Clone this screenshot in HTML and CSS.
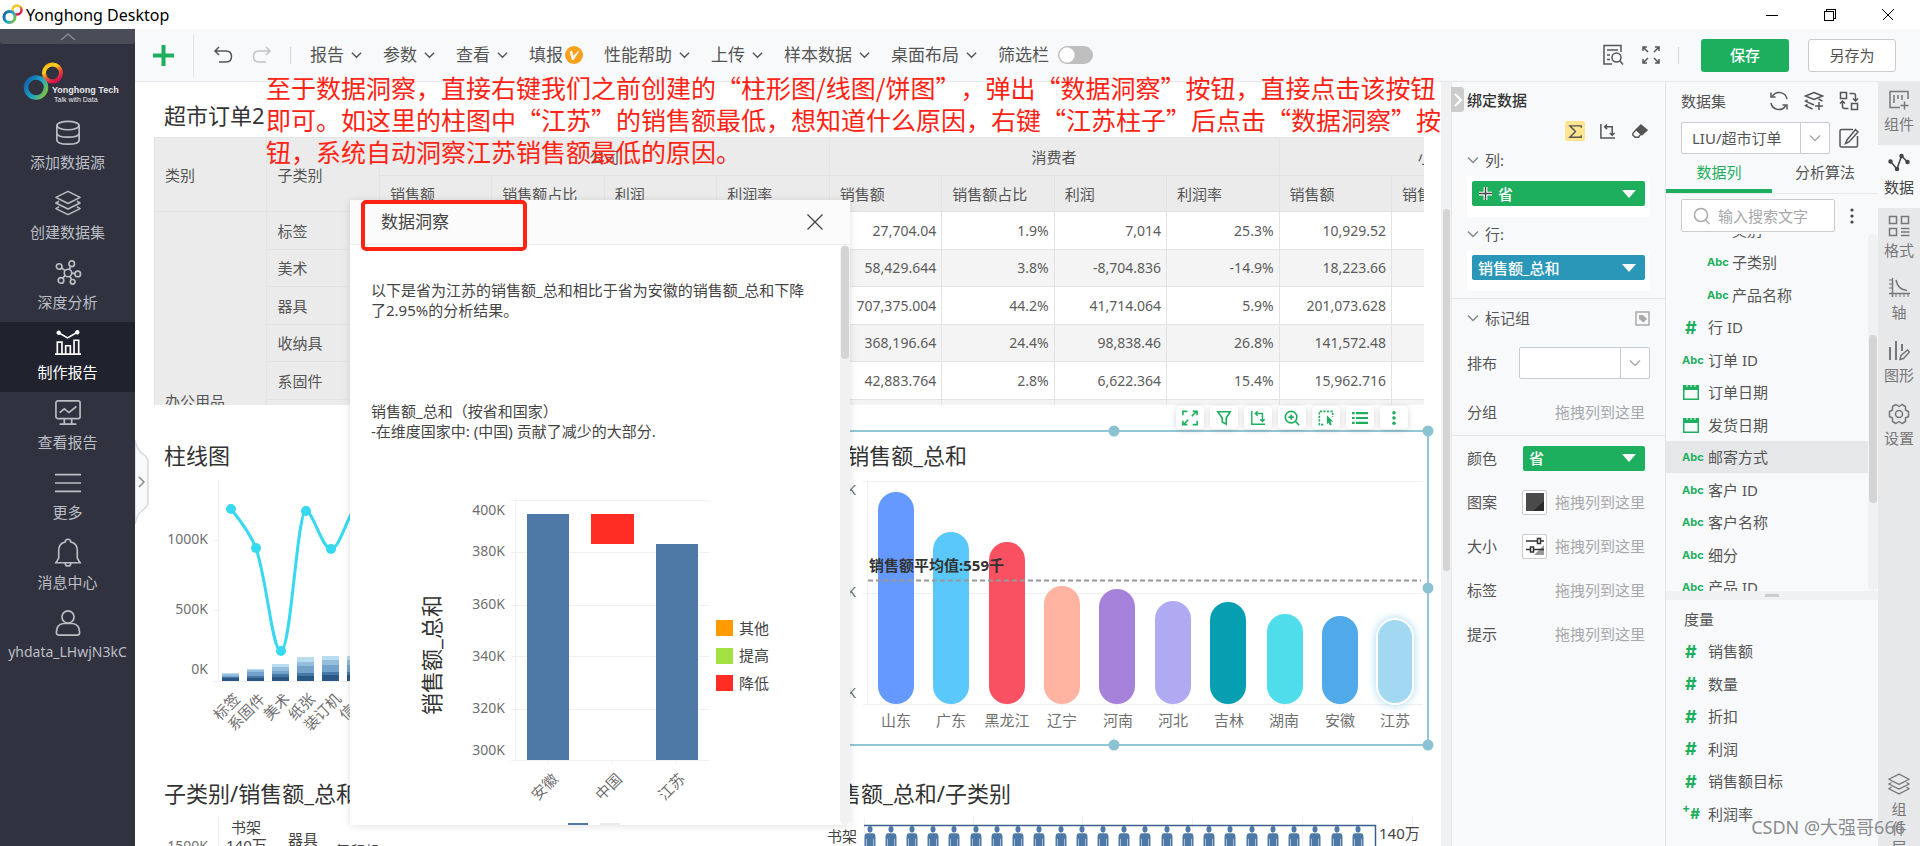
FILE: index.html
```html
<!DOCTYPE html>
<html lang="zh-CN">
<head>
<meta charset="utf-8">
<title>Yonghong Desktop</title>
<link rel="stylesheet" href="styles.css">
</head>
<body>
<svg class="defs" width="0" height="0" aria-hidden="true">
  <defs>
    <linearGradient id="warm" x1="0" y1="0" x2="0.6" y2="1"><stop offset="0" stop-color="#f7b516"/><stop offset="0.35" stop-color="#fbd31c"/><stop offset="0.65" stop-color="#ee5a2b"/><stop offset="1" stop-color="#d8134f"/></linearGradient>
    <linearGradient id="cool" x1="0" y1="0.2" x2="1" y2="0.8"><stop offset="0" stop-color="#1265ae"/><stop offset="0.55" stop-color="#1ea6c9"/><stop offset="1" stop-color="#7cc243"/></linearGradient>
    <symbol id="chev" viewBox="0 0 12 8"><path d="M1 1.5l5 5 5-5" fill="none" stroke="currentColor" stroke-width="1.5"/></symbol>
    <symbol id="tri" viewBox="0 0 14 8"><path d="M0 0h14L7 8z" fill="currentColor"/></symbol>
    <symbol id="layers" viewBox="0 0 28 28"><path d="M14 1.500L27 8 14 14.500 1 8zM4.500 12L1 14l13 6.500L27 14l-3.500-2M4.500 18L1 20l13 6.500L27 20l-3.500-2" fill="none" stroke="currentColor" stroke-width="1.600" stroke-linejoin="round"/></symbol>
    <symbol id="cal" viewBox="0 0 16 16"><path d="M0 1h16v15H0zM1.500 6v8.500h13V6z" fill="currentColor" fill-rule="evenodd"/><path d="M4 0v3M12 0v3M8 0v3" stroke="#f8f9fb" stroke-width="1"/></symbol>
    <symbol id="axis" viewBox="0 0 18 18"><path d="M2 1v15h15M6 4h8v9M8.500 1.500L6 4l2.500 2.500M11.500 10.500L14 13l2.500-2.500" fill="none" stroke="currentColor" stroke-width="1.600"/></symbol>
    <symbol id="man" viewBox="0 0 12 24" preserveAspectRatio="none"><circle cx="6" cy="2.500" r="2.500"/><path d="M3 5.500h6q2.500 0 2.500 3V15H9.500V9.500H9V24H6.500V15h-1v9H3V9.500h-.5V15h-2V8.500q0-3 2.500-3z"/></symbol>
  </defs>
</svg>

<header class="titlebar">
  <svg class="applogo" viewBox="0 0 21 21"><circle cx="15" cy="6" r="4.500" fill="none" stroke="url(#warm)" stroke-width="2.500"/><circle cx="7.500" cy="13" r="5.500" fill="none" stroke="url(#cool)" stroke-width="3"/></svg>
  <span class="appname">Yonghong Desktop</span>
  <div class="winctl">
    <button aria-label="最小化"><svg viewBox="0 0 14 14"><path d="M1 7.500h12"/></svg></button>
    <button aria-label="还原"><svg viewBox="0 0 14 14"><path d="M1.500 3.500h9v9h-9zM3.500 3.500v-2h9v9h-2"/></svg></button>
    <button aria-label="关闭"><svg viewBox="0 0 14 14"><path d="M1.500 1.500l11 11M12.500 1.500l-11 11"/></svg></button>
  </div>
</header>

<div class="app">
  <nav class="sidebar">
    <button class="fold" aria-label="收起"><svg viewBox="0 0 16 8"><path d="M1 7l7-6 7 6"/></svg></button>
    <svg class="brand" viewBox="0 44 135 68">
      <circle cx="52.500" cy="73" r="8.500" fill="none" stroke="url(#warm)" stroke-width="4"/>
      <circle cx="36" cy="87.500" r="10" fill="none" stroke="url(#cool)" stroke-width="4.500"/>
      <text class="b1" x="52" y="93">Yonghong Tech</text><text class="b2" x="54" y="102">Talk with Data</text>
    </svg>
    <a class="nav" href="#"><svg viewBox="0 0 28 28"><ellipse cx="14" cy="6" rx="12" ry="4.500"/><path d="M2 6v15.500q0 4.500 12 4.500t12-4.500V6M2 14q0 4.500 12 4.500T26 14"/></svg>添加数据源</a>
    <a class="nav" href="#"><svg><use href="#layers"/></svg>创建数据集</a>
    <a class="nav" href="#"><svg viewBox="0 0 28 28"><circle cx="14" cy="14" r="4"/><circle cx="4.500" cy="7" r="3"/><circle cx="18" cy="4" r="3"/><circle cx="24.500" cy="15" r="3"/><circle cx="6.500" cy="22" r="3"/><circle cx="19" cy="23.500" r="2.500"/><path d="M7 8.500l4 3M16.800 7l-1.300 3.300M18 14.200l3.500.4M11 16.500l-2.500 3M16 17.500l1.800 3.500"/></svg>深度分析</a>
    <a class="nav on" href="#"><svg viewBox="0 0 28 28"><path class="b" d="M0 26h28M2.500 26V13h5v13M11.500 26v-9h5v9M20.500 26V11h5v15M4 3l9.500 5.500L24 2.500"/><circle class="f" cx="4" cy="3" r="1.500"/><circle class="f" cx="24" cy="2.500" r="1.500"/></svg>制作报告</a>
    <a class="nav" href="#"><svg viewBox="0 0 28 28"><rect x="1" y="1" width="26" height="19" rx="2"/><path d="M5 13.500l5-4 5 4 8-6.500M10 20v5M18 20v5M5 26h18"/></svg>查看报告</a>
    <a class="nav" href="#"><svg viewBox="0 0 28 28"><path d="M0 5h28M0 14h28M0 23h28"/></svg>更多</a>
    <a class="nav" href="#"><svg viewBox="0 0 28 28"><path d="M1 24.500h26l-3-5v-8q0-8-7-9.300a3 3 0 0 0-6 0Q4 3.500 4 11.500v8zM11 25q0 3 3 3t3-3"/></svg>消息中心</a>
    <a class="nav user" href="#"><svg viewBox="0 0 28 28"><circle cx="14" cy="7.500" r="6.500"/><path d="M4 27q-2.500 0-2.500-2.500Q1.500 15.500 9 14.500h10q7.500 1 7.500 10 0 2.500-2.500 2.500z"/></svg>yhdata_LHwjN3kC</a>
  </nav>

  <div class="main">
    <div class="toolbar">
      <button class="add" aria-label="新建"><svg viewBox="0 0 21 21"><path d="M10.500 0v21M0 10.500h21" stroke="#1daf5d" stroke-width="4"/></svg></button>
      <button class="undo" aria-label="撤销"><svg viewBox="0 0 20 18"><path d="M6 1L2 5l4 4M2 5h11q5.500 0 5.500 5.500T13 16H6"/></svg></button>
      <button class="redo" aria-label="重做"><svg viewBox="0 0 20 18"><path d="M14 1l4 4-4 4M18 5H7Q1.500 5 1.500 10.500T7 16h7"/></svg></button>
      <i class="sep"></i>
      <div class="menus">
        <button>报告<svg><use href="#chev"/></svg></button>
        <button>参数<svg><use href="#chev"/></svg></button>
        <button>查看<svg><use href="#chev"/></svg></button>
        <button class="vip">填报<svg viewBox="0 0 18 18"><circle cx="9" cy="9" r="9" fill="#f9a01c"/><path d="M4.500 5.500l2.500-.5 1.500 5L13 5l1 .5-5.500 8.500H7z" fill="#fff"/></svg></button>
        <button>性能帮助<svg><use href="#chev"/></svg></button>
        <button>上传<svg><use href="#chev"/></svg></button>
        <button>样本数据<svg><use href="#chev"/></svg></button>
        <button>桌面布局<svg><use href="#chev"/></svg></button>
        <label>筛选栏<input class="toggle" type="checkbox"></label>
      </div>
      <div class="right">
        <button class="ic" aria-label="查找"><svg viewBox="0 0 22 22"><path d="M10 20H2V1.500h17V8M5 6h11M5 11h3M5 15.500h3"/><circle cx="14.500" cy="13.500" r="4.500"/><path d="M18 17l3 3.500"/></svg></button>
        <button class="ic" aria-label="全屏"><svg viewBox="0 0 22 22"><path d="M3 7V3h4M3 3l5 5M15 3h4v4M19 3l-5 5M3 15v4h4M3 19l5-5M15 19h4v-4M19 19l-5-5"/></svg></button>
        <i class="sep"></i>
        <button class="save">保存</button>
        <button class="saveas">另存为</button>
      </div>
    </div>

    <div class="work">
      <main class="canvas">
        <h2>超市订单2</h2>
        <div class="tablewrap">
          <table>
            <thead>
              <tr class="h1"><th rowspan="2">类别</th><th rowspan="2">子类别</th><th class="grp" colspan="4">公司</th><th class="grp" colspan="4">消费者</th><th class="grp" colspan="3">小型企业</th></tr>
              <tr class="h2"><th>销售额</th><th>销售额占比</th><th>利润</th><th>利润率</th><th>销售额</th><th>销售额占比</th><th>利润</th><th>利润率</th><th>销售额</th><th>销售额占比</th><th>利润</th></tr>
            </thead>
            <tbody>
              <tr><th rowspan="10">办公用品</th><th>标签</th><td></td><td></td><td></td><td></td><td>27,704.04</td><td>1.9%</td><td>7,014</td><td>25.3%</td><td>10,929.52</td><td></td><td></td></tr>
              <tr><th>美术</th><td></td><td></td><td></td><td></td><td>58,429.644</td><td>3.8%</td><td>-8,704.836</td><td>-14.9%</td><td>18,223.66</td><td></td><td></td></tr>
              <tr><th>器具</th><td></td><td></td><td></td><td></td><td>707,375.004</td><td>44.2%</td><td>41,714.064</td><td>5.9%</td><td>201,073.628</td><td></td><td></td></tr>
              <tr><th>收纳具</th><td></td><td></td><td></td><td></td><td>368,196.64</td><td>24.4%</td><td>98,838.46</td><td>26.8%</td><td>141,572.48</td><td></td><td></td></tr>
              <tr><th>系固件</th><td></td><td></td><td></td><td></td><td>42,883.764</td><td>2.8%</td><td>6,622.364</td><td>15.4%</td><td>15,962.716</td><td></td><td></td></tr>
              <tr><th></th><td></td><td></td><td></td><td></td><td></td><td></td><td></td><td></td><td></td><td></td><td></td></tr>
              <tr><th></th></tr><tr><th></th></tr><tr><th></th></tr><tr><th></th></tr>
            </tbody>
          </table>
        </div>

        <div class="charts">
          <section class="widget">
            <h2>柱线图</h2>
            <svg class="plot" viewBox="154 476 635 269">
              <path class="grid" d="M218.500 480v201M213 681.500h576M213 540.500h6M213 610.500h6M231 682v4M256 682v4M281 682v4M306 682v4M331 682v4"/>
              <g class="ax end"><text x="208" y="544">1000K</text><text x="208" y="614">500K</text><text x="208" y="674">0K</text></g>
              <g fill="#b9dcf0"><path d="M222 673h17v8h-17zM247 669h17v12h-17zM272 664h17v17h-17zM297 657h17v24h-17zM322 656h17v25h-17zM347 656h17v25h-17z"/></g>
              <g fill="#94bddb"><path d="M222 674h17v7h-17zM247 670h17v11h-17zM272 667h17v14h-17zM297 662h17v19h-17zM322 660h17v21h-17zM347 660h17v21h-17z"/></g>
              <g fill="#73a2cc"><path d="M222 676h17v5h-17zM247 672h17v9h-17zM272 671h17v10h-17zM297 666h17v15h-17zM322 665h17v16h-17zM347 665h17v16h-17z"/></g>
              <g fill="#4478a8"><path d="M222 677h17v4h-17zM247 676h17v5h-17zM272 674h17v7h-17zM297 673h17v8h-17zM322 672h17v9h-17zM347 672h17v9h-17z"/></g>
              <g fill="#2a5783"><path d="M222 678h17v3h-17zM247 678h17v3h-17zM272 677h17v4h-17zM297 676h17v5h-17zM322 675h17v6h-17zM347 675h17v6h-17z"/></g>
              <path d="M231 509Q249 531 256 548C268 585 272 651 281 651C291 651 297 511 306 511C313 511 322 549 331 549C339 549 345 523 358 500" fill="none" stroke="#37d9f1" stroke-width="3"/>
              <g fill="#37d9f1"><circle cx="231" cy="509" r="5"/><circle cx="256" cy="548" r="5"/><circle cx="281" cy="651" r="5"/><circle cx="306" cy="511" r="5"/><circle cx="331" cy="549" r="5"/></g>
              <g class="ax tilt end"><text transform="translate(241 700) rotate(-45)">标签</text><text transform="translate(266 700) rotate(-45)">系固件</text><text transform="translate(291 700) rotate(-45)">美术</text><text transform="translate(316 700) rotate(-45)">纸张</text><text transform="translate(342 700) rotate(-45)">装订机</text><text transform="translate(367 700) rotate(-45)">信封</text></g>
            </svg>
          </section>

          <section class="widget selected">
            <h2>省/销售额_总和</h2>
            <svg class="plot" viewBox="799 476 629 269">
              <path class="grid" d="M867.500 481v223M863 481.500h560M863 593.500h560M863 704.500h560M896 705v4M951 705v4M1007 705v4M1062 705v4M1117 705v4M1173 705v4M1229 705v4M1284 705v4M1340 705v4M1395 705v4"/>
              <g class="ax end"><text x="856" y="495">1000K</text><text x="856" y="597">500K</text><text x="856" y="698">0K</text></g>
              <rect x="878" y="492" width="36" height="212" rx="18" fill="#6699ff"/>
              <rect x="933" y="532" width="36" height="172" rx="18" fill="#5ac8fa"/>
              <rect x="989" y="542" width="36" height="162" rx="18" fill="#f95062"/>
              <rect x="1044" y="586" width="36" height="118" rx="18" fill="#ffb3a0"/>
              <rect x="1099" y="589" width="36" height="115" rx="18" fill="#a581d9"/>
              <rect x="1155" y="601" width="36" height="103" rx="18" fill="#b0aaf3"/>
              <rect x="1210" y="602" width="36" height="102" rx="18" fill="#069fb2"/>
              <rect x="1267" y="614" width="36" height="90" rx="18" fill="#4fddec"/>
              <rect x="1322" y="616" width="36" height="88" rx="18" fill="#50aaea"/>
              <rect class="glow" x="1377" y="619" width="36" height="85" rx="18"/>
              <path d="M868 580.500h553" stroke="#999" stroke-width="2" stroke-dasharray="5 3"/>
              <text class="avg" x="869" y="571">销售额平均值:559千</text>
              <g class="ax mid"><text x="896" y="726">山东</text><text x="951" y="726">广东</text><text x="1007" y="726">黑龙江</text><text x="1062" y="726">辽宁</text><text x="1118" y="726">河南</text><text x="1173" y="726">河北</text><text x="1229" y="726">吉林</text><text x="1284" y="726">湖南</text><text x="1340" y="726">安徽</text><text x="1395" y="726">江苏</text></g>
            </svg>
            <i class="knob tc"></i><i class="knob tr"></i><i class="knob mr"></i><i class="knob bc"></i><i class="knob br"></i>
            <div class="tools">
              <button aria-label="放大"><svg viewBox="0 0 18 18"><path d="M1 6V1.500h5M12 1.500h5V6M17 12v4.500h-5M6 16.500H1V12M11 7l5-5M7 11l-5 5"/></svg></button>
              <button aria-label="筛选"><svg viewBox="0 0 18 18"><path d="M2 2h14l-4.500 7v7L7 13.500V9z"/></svg></button>
              <button aria-label="转换"><svg><use href="#axis"/></svg></button>
              <button aria-label="缩放"><svg viewBox="0 0 18 18"><circle cx="8" cy="8" r="6.500"/><path d="M13 13l4 4M8 5v6M5 8h6"/></svg></button>
              <button aria-label="框选"><svg viewBox="0 0 18 18"><path d="M6 16.500H1.500v-15h15V8" stroke-dasharray="2.500 1.500"/><path d="M10 6l7 7h-3l1.500 3.500-2 .8L12 14l-2 2z" fill="#1daf5d" stroke="none"/></svg></button>
              <button aria-label="明细"><svg viewBox="0 0 18 18"><path d="M0 3.500h3M4.500 3.500H18M0 9h3M4.500 9H18M0 14.500h3M4.500 14.500H18" stroke-width="2.500"/></svg></button>
              <button aria-label="更多操作"><svg viewBox="0 0 18 18"><g fill="#1daf5d" stroke="none"><circle cx="9" cy="3" r="2"/><circle cx="9" cy="9" r="2"/><circle cx="9" cy="15" r="2"/></g></svg></button>
            </div>
          </section>

          <section class="widget low">
            <h2>子类别/销售额_总和</h2>
            <svg class="plot" viewBox="154 817 635 269">
              <path class="grid" d="M218.500 818v200"/>
              <g class="ax end"><text x="208" y="851">1500K</text></g>
              <g class="ax dark"><text x="231" y="833">书架</text><text x="226" y="851">140万</text><text x="288" y="845">器具</text><text x="335" y="857">复印机</text></g>
            </svg>
          </section>

          <section class="widget low">
            <h2>销售额_总和/子类别</h2>
            <svg class="plot" viewBox="799 817 629 269">
              <path class="grid" d="M864.500 818v200M973.500 818v200M1082.500 818v200M1192.500 818v200M1302.500 818v200M1412.500 818v200"/>
              <path d="M864 825.500h511.500V860" fill="none" stroke="#3c5f8a" stroke-width="1.500"/>
              <g class="ax dark end"><text x="857" y="842">书架</text></g>
              <g class="ax dark"><text x="1379" y="839">140万</text></g>
              <g fill="#4e79a7">
                <use href="#man" x="864" y="826" width="12" height="32"/><use href="#man" x="885" y="826" width="12" height="32"/><use href="#man" x="906" y="826" width="12" height="32"/><use href="#man" x="927" y="826" width="12" height="32"/><use href="#man" x="948" y="826" width="12" height="32"/><use href="#man" x="970" y="826" width="12" height="32"/><use href="#man" x="991" y="826" width="12" height="32"/><use href="#man" x="1012" y="826" width="12" height="32"/><use href="#man" x="1033" y="826" width="12" height="32"/><use href="#man" x="1055" y="826" width="12" height="32"/><use href="#man" x="1076" y="826" width="12" height="32"/><use href="#man" x="1097" y="826" width="12" height="32"/><use href="#man" x="1118" y="826" width="12" height="32"/><use href="#man" x="1139" y="826" width="12" height="32"/><use href="#man" x="1161" y="826" width="12" height="32"/><use href="#man" x="1182" y="826" width="12" height="32"/><use href="#man" x="1203" y="826" width="12" height="32"/><use href="#man" x="1224" y="826" width="12" height="32"/><use href="#man" x="1246" y="826" width="12" height="32"/><use href="#man" x="1267" y="826" width="12" height="32"/><use href="#man" x="1288" y="826" width="12" height="32"/><use href="#man" x="1309" y="826" width="12" height="32"/><use href="#man" x="1331" y="826" width="12" height="32"/><use href="#man" x="1352" y="826" width="12" height="32"/>
              </g>
            </svg>
          </section>
        </div>
        <button class="drawer" aria-label="展开"><svg viewBox="0 0 14 84"><path d="M0 0Q2 10 8 14q5 4 5 7v42q0 3-5 7-6 4-8 14z" fill="#f8f9fb" stroke="#d5d8de"/><path d="M4 37l5 5-5 5" fill="none" stroke="#888" stroke-width="1.500"/></svg></button>
      </main>
      <div class="vscroll canvasbar"><i></i></div>

      <aside class="bind">
        <button class="tuck" aria-label="收起面板"><svg viewBox="0 0 8 14"><path d="M1 1l6 6-6 6" fill="none" stroke="#fff" stroke-width="2"/></svg></button>
        <h3>绑定数据</h3>
        <div class="bindtools">
          <button class="sum" aria-label="汇总"><svg viewBox="0 0 18 18"><path d="M15 5V3H3l6 6-6 6h12v-2"/></svg></button>
          <button aria-label="行列互换"><svg><use href="#axis"/></svg></button>
          <button aria-label="清空"><svg viewBox="0 0 18 18"><path d="M2 11l3.500-4 5 4.500L8 15H4.500L2 13z"/><path d="M6 6.500L10.500 2 17 7.500l-5.500 5z" fill="#555"/></svg></button>
        </div>
        <div class="lbl"><svg><use href="#chev"/></svg>列:</div>
        <div class="slot"><button class="pill green"><svg class="plus" viewBox="0 0 16 16"><path d="M8 1v14M1 8h14" stroke="#fff" stroke-width="4"/><path d="M8 1v14M1 8h14" stroke="#444" stroke-width="1.500"/></svg>省<svg class="t"><use href="#tri"/></svg></button></div>
        <div class="lbl"><svg><use href="#chev"/></svg>行:</div>
        <div class="slot"><button class="pill blue">销售额_总和<svg class="t"><use href="#tri"/></svg></button></div>
        <div class="marks">
          <div class="lbl tall"><svg><use href="#chev"/></svg>标记组<svg class="tag" viewBox="0 0 15 15"><path d="M1 1h13v13H1z" fill="none" stroke="#aaa" stroke-width="1.500"/><path d="M4 4h4l4 4-3.500 3.500L4 8z" fill="#aaa"/></svg></div>
          <div class="row arrange"><label for="arr">排布</label><span class="combo"><select id="arr"><option></option></select><svg><use href="#chev"/></svg></span></div>
          <div class="row group"><span>分组</span><em>拖拽列到这里</em></div>
        </div>
        <div class="row"><span>颜色</span><button class="pill green short">省<svg class="t"><use href="#tri"/></svg></button></div>
        <div class="row"><span>图案</span><button class="mini" aria-label="图案"><svg viewBox="0 0 18 18"><path d="M0 0h18v18H0z" fill="#4a4a4a"/><path d="M18 8v10H7z" fill="#2c2c2c"/></svg></button><em>拖拽列到这里</em></div>
        <div class="row"><span>大小</span><button class="mini" aria-label="大小"><svg viewBox="0 0 18 18"><path d="M8 18L18 8v10z" fill="#999"/><g fill="none" stroke="#333" stroke-width="1.500"><path d="M0 4h11M15 4h3M0 12.500h4M8 12.500h10"/><rect x="11.500" y="1.500" width="3" height="5"/><rect x="4.500" y="10" width="3" height="5"/></g></svg></button><em>拖拽列到这里</em></div>
        <div class="row"><span>标签</span><em>拖拽列到这里</em></div>
        <div class="row"><span>提示</span><em>拖拽列到这里</em></div>
      </aside>

      <aside class="data">
        <div class="dhead"><h4>数据集</h4>
          <button aria-label="刷新"><svg viewBox="0 0 20 20"><path d="M18 8A8 8 0 0 0 3.500 5M2 1.500V6h4.500M2 12a8 8 0 0 0 14.500 3M18 18.500V14h-4.500"/></svg></button>
          <button aria-label="添加数据集"><svg viewBox="0 0 20 20"><path d="M10 1.500L18.500 5 10 8.500 1.500 5zM3.500 9l-2 1.200L10 14M3.500 13.500l-2 1.200L8.500 18M18.500 10.200L14.500 8M15 11v8M11 15h8"/></svg></button>
          <button aria-label="替换"><svg viewBox="0 0 20 20"><path d="M1.500 1.500h6v6h-6zM12.500 12.500h6v6h-6zM10.500 2.500h4q2 0 2 2V10M14 7.500l2.500 2.500L19 7.500M9.500 17.500h-4q-2 0-2-2V10M1 12.500L3.500 10 6 12.500"/></svg></button>
        </div>
        <div class="dpick"><span class="combo"><select aria-label="数据集"><option>LIU/超市订单</option></select><svg><use href="#chev"/></svg></span>
          <button aria-label="编辑"><svg viewBox="0 0 20 20"><path d="M14 1.500H2.500q-1.500 0-1.500 1.500v14.500Q1 19 2.500 19H17q1.500 0 1.500-1.500V8M16.500 1.500l2.500 2.500-9 10-3.500 1.500L8 12z"/></svg></button>
        </div>
        <div class="dtabs"><button class="on">数据列</button><button>分析算法</button></div>
        <div class="dsearch"><label class="search"><svg viewBox="0 0 18 18"><circle cx="8" cy="8" r="6.500"/><path d="M12.500 13l4 4"/></svg><input type="text" placeholder="输入搜索文字" aria-label="输入搜索文字"></label>
          <button class="dots" aria-label="更多"><svg viewBox="0 0 4 16"><g fill="#444"><circle cx="2" cy="2" r="1.600"/><circle cx="2" cy="8" r="1.600"/><circle cx="2" cy="14" r="1.600"/></g></svg></button></div>
        <div class="dlist">
          <ul>
            <li class="sub"><b>Abc</b>类别</li><li class="sub"><b>Abc</b>子类别</li><li class="sub"><b>Abc</b>产品名称</li>
            <li><b class="n">#</b>行 ID</li><li><b>Abc</b>订单 ID</li><li><svg><use href="#cal"/></svg>订单日期</li><li><svg><use href="#cal"/></svg>发货日期</li>
            <li class="hot"><b>Abc</b>邮寄方式</li><li><b>Abc</b>客户 ID</li><li><b>Abc</b>客户名称</li><li><b>Abc</b>细分</li><li><b>Abc</b>产品 ID</li>
          </ul>
          <div class="vscroll"><i></i></div>
        </div>
        <div class="split"><i></i></div>
        <ul class="measures">
          <li class="cap">度量</li><li><b class="n">#</b>销售额</li><li><b class="n">#</b>数量</li><li><b class="n">#</b>折扣</li><li><b class="n">#</b>利润</li><li><b class="n">#</b>销售额目标</li><li><b class="n calc"><sup>+</sup>#</b>利润率</li>
        </ul>
      </aside>

      <nav class="rail">
        <button><svg viewBox="0 0 22 22"><path d="M12 18.500H2v-16h18V10M6 6v8M10 6v4M14 6v5M16.500 12.500v8M12.500 16.500h8"/></svg>组件</button>
        <button class="on"><svg viewBox="0 0 22 22"><path d="M2.500 9.500L9 17l4.500-13 6 6"/><g fill="#444"><circle cx="2.500" cy="9.500" r="1.500"/><circle cx="9" cy="17" r="1.500"/><circle cx="13.500" cy="4" r="1.500"/><circle cx="19.500" cy="10" r="1.500"/></g></svg>数据</button>
        <button><svg viewBox="0 0 22 22"><path d="M1.500 1.500h7v7h-7zM13.500 1.500h7v7h-7zM1.500 13.500h7v7h-7zM13 13.500h8.500M13 17h8.500M13 20.500h8.500"/></svg>格式</button>
        <button><svg viewBox="0 0 22 22"><path d="M4.500 1v19M1 16.500h21M8 3q2 10 11 10.500" /><path d="M1 3h3M1 7h3M1 11h3M8 17v3M12 17v3M16 17v3M20 17v3" stroke-width="1"/></svg>轴</button>
        <button><svg viewBox="0 0 22 22"><path d="M2 7v13M8 1v19M14 4v7" stroke-width="2"/><path d="M12 19.500l1-4 6.500-5.500 2 2-6 6.500z"/></svg>图形</button>
        <button><svg viewBox="0 0 22 22"><circle cx="11" cy="11" r="3.500"/><path d="M8 1.500l3 2 3-2 3.500 2v3.500l3 1.500v5l-3 1.500v3.500l-3.500 2-3-2-3 2-3.500-2V15l-3-1.500v-5l3-1.500V3.500z" stroke-linejoin="round"/></svg>设置</button>
        <button class="layer"><svg><use href="#layers"/></svg><span>组件层</span></button>
      </nav>
    </div>
  </div>
</div>

<section class="insight" role="dialog" aria-label="数据洞察">
  <div class="ihead"><span>数据洞察</span><button aria-label="关闭"><svg viewBox="0 0 16 16"><path d="M.5.5l15 15M15.500.5l-15 15" stroke="#444" stroke-width="1.300"/></svg></button></div>
  <div class="ibody">
    <div class="itext">
      <p>以下是省为江苏的销售额_总和相比于省为安徽的销售额_总和下降<br>了2.95%的分析结果。</p>
      <p class="p2">销售额_总和（按省和国家）<br>-在维度国家中: (中国) 贡献了减少的大部分.</p>
      <svg class="iplot" viewBox="350 490 490 335">
        <path class="grid" d="M515.500 500v260M511 500.500h198M511 552.500h198M511 605.500h198M511 656.500h198M511 709.500h198M511 760.500h198M548 761v4M612 761v4M676 761v4"/>
        <g class="ax end"><text x="505" y="515">400K</text><text x="505" y="556">380K</text><text x="505" y="609">360K</text><text x="505" y="661">340K</text><text x="505" y="713">320K</text><text x="505" y="755">300K</text></g>
        <path d="M527 514h42v246h-42zM656 544h42v216h-42z" fill="#4e79a7"/>
        <path d="M591 514h43v30h-43z" fill="#ff2d23"/>
        <path d="M716 620h17v16h-17z" fill="#ff9a00"/><path d="M716 648h17v16h-17z" fill="#a4e142"/><path d="M716 675h17v16h-17z" fill="#ff2d23"/>
        <g class="ax dark"><text x="739" y="634">其他</text><text x="739" y="661">提高</text><text x="739" y="689">降低</text></g>
        <g class="ax tilt end"><text transform="translate(559 780) rotate(-45)">安徽</text><text transform="translate(623 780) rotate(-45)">中国</text><text transform="translate(686 780) rotate(-45)">江苏</text></g>
        <text class="ytitle" transform="translate(440 655) rotate(-90)">销售额_总和</text>
        <path d="M568 823h20v2h-20z" fill="#4e79a7"/><path d="M600 823h20v2h-20z" fill="#ebebeb"/>
      </svg>
    </div>
    <div class="vscroll"><i></i></div>
  </div>
  <i class="frame"></i>
</section>

<p class="note">至于数据洞察，直接右键我们之前创建的“柱形图/线图/饼图”，弹出“数据洞察”按钮，直接点击该按钮<br>即可。如这里的柱图中“江苏”的销售额最低，想知道什么原因，右键“江苏柱子”后点击“数据洞察”按<br>钮，系统自动洞察江苏销售额最低的原因。</p>
<p class="mark">CSDN @大强哥666</p>
</body>
</html>
```

FILE: styles.css
```css
* { box-sizing: border-box; }
body {
  margin: 0;
  height: 100vh;
  display: flex;
  flex-direction: column;
  overflow: hidden;
  position: relative;
  background: #fff;
  color: #555;
  font-family: "Noto Sans", "Noto Sans CJK SC", sans-serif;
  font-size: 15px;
  line-height: 22px;
}
h2, h3, h4, p, ul { margin: 0; padding: 0; font-weight: 400; }
ul { list-style: none; }
button, input, select { font: inherit; color: inherit; }
button { border: 0; padding: 0; background: none; display: flex; align-items: center; white-space: nowrap; }
button svg { fill: none; stroke: currentColor; stroke-width: 1.500; }
svg { flex: none; display: block; }
em { font-style: normal; }
.defs { position: absolute; }

.titlebar { height: 29px; flex: none; display: flex; align-items: center; padding-left: 2px; color: #000; }
.applogo { width: 21px; height: 21px; }
.appname { margin-left: 3px; font-size: 16px; flex: 1; }
.winctl { display: flex; gap: 44px; padding-right: 25px; }
.winctl svg { width: 14px; height: 14px; stroke-width: 1; shape-rendering: crispEdges; }

.app { flex: 1; min-height: 0; display: flex; }
.sidebar { width: 135px; flex: none; background: #30333f; color: #bcbec3; display: flex; flex-direction: column; }
.fold { height: 15px; background: #4a4c57; justify-content: center; border-radius: 0 0 3px 3px; }
.fold svg { width: 16px; height: 8px; color: #888b93; }
.brand { width: 135px; height: 68px; }
.brand text { fill: #e8e8ea; font-family: "Liberation Sans", sans-serif; }
.brand .b1 { font-size: 9px; font-weight: 700; }
.brand .b2 { font-size: 7px; }
.nav { height: 70px; padding-top: 8px; display: flex; flex-direction: column; align-items: center; gap: 5px; color: inherit; text-decoration: none; }
.nav svg { width: 26px; height: 26px; fill: none; stroke: currentColor; stroke-width: 1.800; overflow: visible; }
.nav .f { fill: currentColor; }
.nav.on { background: #20232d; color: #fff; }
.nav.user { font-size: 14px; }

.main { flex: 1; min-width: 0; display: flex; flex-direction: column; }
.toolbar { height: 53px; flex: none; display: flex; align-items: center; background: #f8f9fb; border-bottom: 1px solid #e6e8eb; }
.add { width: 59px; height: 43px; padding-left: 18px; border-right: 1px solid #e3e5e8; }
.add svg { width: 21px; height: 21px; }
.undo svg, .redo svg { width: 20px; height: 18px; }
.undo { margin-left: 19px; }
.redo { margin-left: 19px; color: #c0c2c5; }
.sep { width: 1px; height: 17px; background: #d5d7da; }
.redo + .sep { margin-left: 18px; }
.menus { display: flex; align-items: center; gap: 21px; margin-left: 19px; font-size: 17px; }
.menus button { gap: 7px; }
.menus button svg { width: 11px; height: 8px; }
.menus .vip { gap: 2px; }
.menus .vip svg { width: 18px; height: 18px; stroke: none; }
.menus label { display: flex; align-items: center; gap: 9px; white-space: nowrap; }
.toggle { appearance: none; width: 35px; height: 18px; margin: 0; border-radius: 9px; background: radial-gradient(circle at 9px 9px, #fff 7px, #bfbfbf 8px); }
.right { margin-left: auto; display: flex; align-items: center; padding-right: 24px; }
.right .ic { margin-right: 16px; }
.right .ic svg { width: 22px; height: 22px; }
.save, .saveas { width: 88px; height: 33px; justify-content: center; border-radius: 3px; }
.save { margin-left: 22px; margin-right: 19px; background: #1daf5d; color: #fff; font-weight: 500; }
.saveas { border: 1px solid #c9cbce; background: #fff; }

.work { flex: 1; min-height: 0; display: flex; }
.canvas { flex: 1; min-width: 0; position: relative; overflow: hidden; padding: 0 13px 0 19px; }
.canvas h2 { height: 46px; padding-left: 10px; font-size: 22px; line-height: 50px; color: #333; white-space: nowrap; }
.canvas > h2 { height: 55px; line-height: 66px; }
.canvas .low h2 { line-height: 44px; }
.tablewrap { height: 268px; margin-right: 4px; overflow: hidden; }
table { table-layout: fixed; width: 1463px; border-collapse: separate; border-spacing: 0; border-left: 1px solid #e3e3e3; border-top: 1px solid #e3e3e3; }
th, td { padding: 0; border-right: 1px solid #e3e3e3; border-bottom: 1px solid #e3e3e3; height: 38px; line-height: 22px; }
tbody tr:nth-child(2) > *, tbody tr:nth-child(4) > * { height: 37px; }
th { background: #ebebeb; font-weight: 400; text-align: left; padding-left: 10px; }
.h2 th { height: 36px; }
th.grp { text-align: center; padding: 0; }
td { text-align: right; padding-right: 5px; font-size: 14px; color: #5c5c5c; }
tbody tr:nth-child(even) td { background: #f4f4f4; }

.charts { margin-top: 25px; display: grid; grid-template-columns: minmax(0, 635fr) minmax(0, 629fr); column-gap: 10px; row-gap: 26px; }
.widget { position: relative; }
.charts .widget:nth-child(even) h2 { padding-left: 18px; }
.plot { width: 100%; height: auto; }
.selected::after { content: ""; position: absolute; inset: 0 -1px -1px 0; border: 2px solid #94c7d6; pointer-events: none; }
.knob { position: absolute; z-index: 1; width: 11px; height: 11px; border-radius: 50%; background: #8cc3d3; transform: translate(-50%, -50%); }
.tc { left: 50%; top: 1px; }
.tr { left: 100%; top: 1px; }
.mr { left: 100%; top: 50%; }
.bc { left: 50%; top: 100%; }
.br { left: 100%; top: 100%; }
.tools { position: absolute; right: 20px; top: -24px; z-index: 1; display: flex; gap: 6px; }
.tools button { width: 28px; height: 23px; justify-content: center; background: #fff; border-radius: 4px; color: #1daf5d; box-shadow: 0 1px 6px rgba(0, 0, 0, 0.16); }
.tools svg { width: 16px; height: 16px; stroke-width: 1.800; }
.grid { fill: none; stroke: #f0f0f2; stroke-width: 1; }
.ax { fill: #707070; font-size: 14px; }
.ax.mid, .ax.dark, .ax.tilt { font-size: 15px; }
.ax.dark { fill: #444; }
.end { text-anchor: end; }
.mid { text-anchor: middle; }
.avg { font-size: 15px; font-weight: 700; fill: #333; }
.glow { fill: #a2d8f1; stroke: #fff; stroke-width: 2; filter: drop-shadow(0 0 4px #a2d8f1); }
.drawer { position: absolute; left: 0; top: 358px; }
.drawer svg { width: 14px; height: 84px; }

.vscroll { width: 10px; flex: none; background: #f0f1f3; border-radius: 5px; display: flex; flex-direction: column; align-items: center; }
.vscroll i { width: 8px; border-radius: 4px; background: #d4d4d4; }
.canvasbar { border-radius: 0; }
.canvasbar i { margin-top: 127px; height: 362px; width: 7px; }

.bind { width: 215px; flex: none; position: relative; background: #f8f9fb; border-left: 1px solid #e6e8eb; border-right: 1px solid #e3e5e8; }
.tuck { position: absolute; left: -1px; top: 5px; width: 13px; height: 25px; background: #ccc; border-radius: 0 3px 3px 0; justify-content: center; }
.tuck svg { width: 8px; height: 14px; }
.bind h3 { padding-left: 15px; font-size: 15px; line-height: 37px; font-weight: 500; color: #333; }
.bindtools { height: 24px; display: flex; align-items: center; justify-content: flex-end; gap: 12px; padding-right: 16px; }
.bindtools button { width: 20px; height: 20px; justify-content: center; }
.bindtools svg { width: 17px; height: 17px; }
.bindtools .sum { background: #ffe491; border-radius: 2px; }
.lbl { height: 33px; padding: 0 15px; display: flex; align-items: center; gap: 6px; }
.lbl > svg:first-child { width: 12px; height: 8px; color: #888; }
.lbl.tall { height: 38px; }
.lbl .tag { width: 15px; height: 15px; margin-left: auto; }
.slot { margin: 0 15px; height: 41px; padding: 5px; background: #fff; border-radius: 3px; }
.pill { width: 100%; height: 25px; padding: 0 9px 0 6px; color: #fff; font-weight: 500; border-radius: 2px; }
.pill .t { width: 14px; height: 8px; margin-left: auto; stroke: none; }
.pill .plus { width: 15px; height: 15px; margin-right: 5px; }
.green { background: #1daf5d; }
.blue { background: #2a97b9; }
.short { width: 122px; margin-left: auto; }
.marks { margin-top: 7px; border-top: 1px solid #e3e5e8; border-bottom: 1px solid #e3e5e8; }
.row { height: 44px; padding: 0 20px 0 15px; display: flex; align-items: center; }
.row em { margin-left: auto; color: #a6a8ab; }
.row.arrange { height: 52px; padding-right: 15px; }
.row.group { height: 46px; }
.arrange .combo { width: 131px; margin-left: auto; }
.mini { width: 25px; height: 25px; margin-left: 25px; justify-content: center; border: 1px solid #c9cbce; border-radius: 2px; background: #fff; }
.mini svg { width: 18px; height: 18px; stroke: none; }
.combo { position: relative; display: flex; height: 32px; border: 1px solid #c9cbce; border-radius: 2px; background: #fff; }
.combo select { appearance: none; border: 0; background: none; width: 100%; padding: 0 30px 0 10px; outline: 0; }
.combo svg { position: absolute; right: 0; top: 0; width: 29px; height: 30px; padding: 0 8px; border-left: 1px solid #c9cbce; color: #aaa; pointer-events: none; }

.data { width: 212px; flex: none; display: flex; flex-direction: column; background: #f8f9fb; }
.dhead { height: 37px; padding: 0 19px 0 15px; display: flex; align-items: center; gap: 15px; }
.dhead h4 { flex: 1; font-size: 15px; }
.dhead svg { width: 20px; height: 20px; }
.dpick { margin: 3px 19px 0 15px; display: flex; align-items: center; gap: 9px; }
.dpick .combo { width: 149px; flex: 1; }
.dpick button svg { width: 20px; height: 20px; }
.dtabs { height: 40px; flex: none; display: flex; border-bottom: 1px solid #e6e8eb; }
.dtabs button { flex: 1; justify-content: center; border-bottom: 4px solid transparent; }
.dtabs .on { color: #1daf5d; border-color: #1daf5d; }
.dsearch { margin: 5px 24px 0 15px; display: flex; align-items: center; justify-content: space-between; }
.search { width: 154px; height: 33px; padding: 0 8px 0 11px; display: flex; align-items: center; gap: 7px; border: 1px solid #c9cbce; border-radius: 2px; background: #fff; }
.search svg { width: 18px; height: 18px; fill: none; stroke: #aaa; stroke-width: 1.500; }
.search input { flex: 1; min-width: 0; border: 0; padding: 0; background: none; outline: 0; }
.search input::placeholder { color: #a6a8ab; }
.dots svg { width: 4px; height: 16px; stroke: none; }
.dlist { margin-top: 2px; height: 357px; flex: none; display: flex; overflow: hidden; }
.dlist ul { flex: 1; margin-top: -21px; }
.data li { height: 33px; padding-left: 16px; display: flex; align-items: center; white-space: pre; }
.data li:nth-child(even) { height: 32px; }
.data li b { width: 26px; flex: none; font: 700 11px "Inter", sans-serif; color: #1daf5d; }
.data li b.n { padding-left: 3px; font-size: 18px; }
.data li b.calc { padding-left: 0; font-size: 15px; display: flex; align-items: center; }
.calc sup { font-size: 12px; line-height: 8px; align-self: flex-start; }
.data li svg { width: 16px; height: 16px; margin: 0 9px 0 1px; color: #1daf5d; }
.data .sub { padding-left: 41px; }
.data .sub b { width: 25px; }
.data .hot { background: #e6e7e9; }
.data .cap { padding-left: 18px; }
.dlist i { margin-top: 101px; height: 168px; }
.split { height: 9px; flex: none; display: flex; align-items: center; justify-content: center; background: #f0f1f3; }
.split i { width: 14px; height: 3px; background: #ccc; }
.measures { margin-top: 2px; }

.rail { width: 42px; flex: none; display: flex; flex-direction: column; background: #e7e8ea; color: #777; }
.rail button { height: 63px; flex: none; flex-direction: column; padding-top: 7px; gap: 2px; }
.rail button:nth-child(3n) { height: 62px; }
.rail svg { width: 22px; height: 22px; }
.rail .on { background: #f8f9fb; color: #444; }
.rail .layer { height: auto; margin-top: 308px; white-space: normal; gap: 5px; }
.layer span { width: 15px; line-height: 19px; }

.insight { position: absolute; left: 350px; top: 200px; width: 500px; height: 625px; display: flex; flex-direction: column; background: #fff; box-shadow: 0 1px 8px rgba(0, 0, 0, 0.12); color: #444; }
.ihead { height: 45px; flex: none; padding: 0 27px 0 31px; display: flex; align-items: center; justify-content: space-between; background: #fbfbfb; border-bottom: 1px solid #ededed; font-size: 17px; }
.ihead svg { width: 16px; height: 16px; }
.ibody { flex: 1; min-height: 0; display: flex; }
.itext { flex: 1; min-width: 0; display: flex; flex-direction: column; padding-top: 35px; overflow: hidden; }
.itext p { padding-left: 21px; line-height: 20px; white-space: nowrap; }
.itext .p2 { margin-top: 81px; margin-bottom: 49px; }
.iplot { width: 100%; height: auto; }
.ytitle { font-size: 22px; fill: #333; text-anchor: middle; }
.ibody .vscroll i { margin-top: 1px; height: 113px; flex: none; }
.frame { position: absolute; left: 11px; top: 0; width: 166px; height: 51px; border: 4px solid #ff2313; border-radius: 5px; }

.note { position: absolute; left: 266px; top: 71px; font-family: "Noto Sans CJK SC", sans-serif; font-size: 25px; line-height: 32px; color: #ff2313; white-space: nowrap; text-spacing-trim: space-all; }
.mark { position: absolute; right: 15px; bottom: 7px; font-size: 18px; line-height: 24px; color: #8a8c8f; }
```
